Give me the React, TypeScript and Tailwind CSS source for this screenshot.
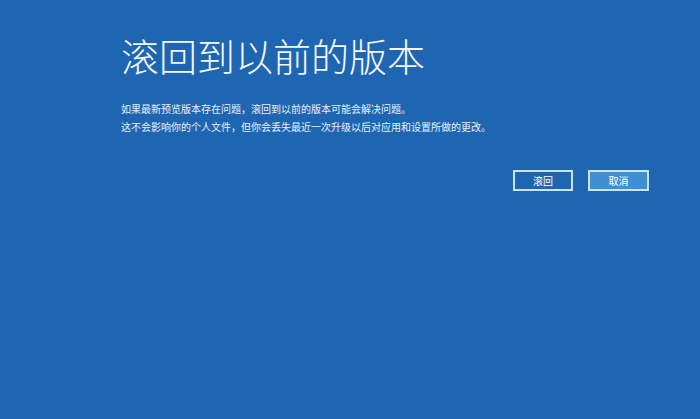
export default function App() {
  const font = { fontFamily: '"Noto Sans CJK SC", "Noto Sans", sans-serif' };
  return (
    <div className="w-[700px] h-[419px] bg-[#1f66b2] text-white overflow-hidden" style={font}>
      <div className="pl-[121px] pt-[30px]">
        <h1 className="text-[38px] leading-[50px] font-light tracking-[0px] text-[#f4f8fc]">滚回到以前的版本</h1>
        <div className="mt-[20px] text-[10px] leading-[18px] text-[#e8f0fa]">
          <p>如果最新预览版本存在问题，滚回到以前的版本可能会解决问题。</p>
          <p>这不会影响你的个人文件，但你会丢失最近一次升级以后对应用和设置所做的更改。</p>
        </div>
      </div>
      <div className="flex justify-end gap-[15px] pr-[51px] mt-[34px]">
        <button className="w-[60px] h-[21px] border-2 border-[#c9e4f6] bg-[#1f66b2] text-[10px] leading-none text-white flex items-center justify-center">滚回</button>
        <button className="w-[61px] h-[21px] border-2 border-[#c9e4f6] bg-[#3f8fd5] text-[10px] leading-none text-white flex items-center justify-center">取消</button>
      </div>
    </div>
  );
}
